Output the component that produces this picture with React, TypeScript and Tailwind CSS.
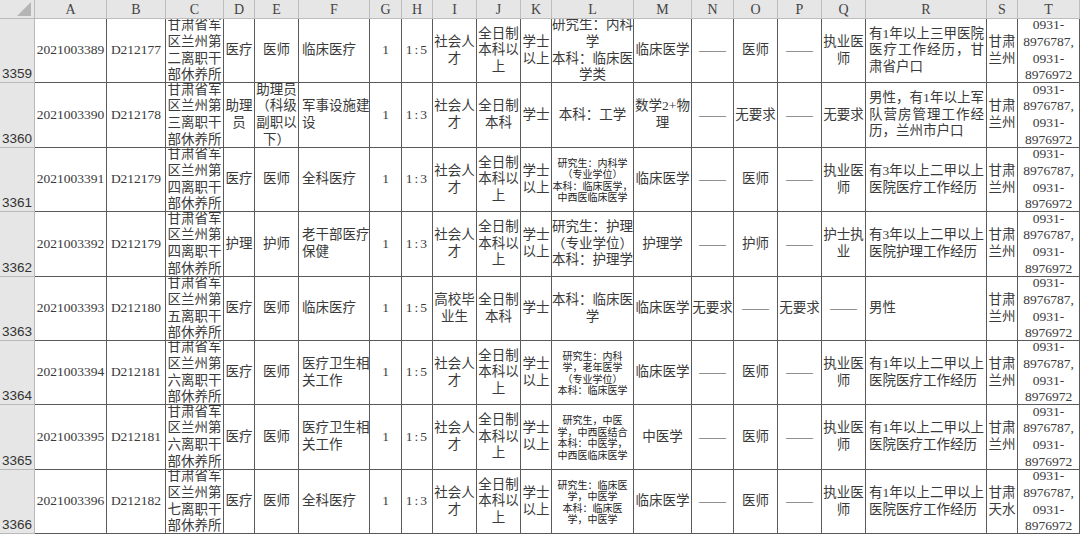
import React from "react";

type Align = "c" | "l" | "j";
type CellDef = { t: string[]; a?: Align; s?: boolean; w?: boolean };

const TEL = ["0931-", "8976787,", "0931-", "8976972"];

const cols = ["A","B","C","D","E","F","G","H","I","J","K","L","M","N","O","P","Q","R","S","T"];

const unit = (n: string) => ["甘肃省军", "区兰州第", n + "离职干", "部休养所"];

const rows: { n: number; cells: CellDef[] }[] = [
  {
    n: 3359,
    cells: [
      { t: ["2021003389"] }, { t: ["D212177"] }, { t: unit("二") }, { t: ["医疗"] }, { t: ["医师"] },
      { t: ["临床医疗"], a: "l" }, { t: ["1"] }, { t: ["1:5"], w: true }, { t: ["社会人", "才"] },
      { t: ["全日制", "本科以", "上"] }, { t: ["学士", "以上"] },
      { t: ["研究生：内科", "学", "本科：临床医", "学类"] }, { t: ["临床医学"] }, { t: ["——"] },
      { t: ["医师"] }, { t: ["——"] }, { t: ["执业医", "师"] },
      { t: ["有1年以上三甲医院", "医疗工作经历，甘", "肃省户口"], a: "j" }, { t: ["甘肃", "兰州"] }, { t: TEL },
    ],
  },
  {
    n: 3360,
    cells: [
      { t: ["2021003390"] }, { t: ["D212178"] }, { t: unit("三") }, { t: ["助理", "员"] },
      { t: ["助理员", "（科级", "副职以", "下）"] }, { t: ["军事设施建", "设"], a: "l" }, { t: ["1"] },
      { t: ["1:3"], w: true }, { t: ["社会人", "才"] }, { t: ["全日制", "本科"] }, { t: ["学士"] },
      { t: ["本科：工学"] }, { t: ["数学2+物", "理"] }, { t: ["——"] }, { t: ["无要求"] }, { t: ["——"] },
      { t: ["无要求"] }, { t: ["男性，有1年以上军", "队营房管理工作经", "历，兰州市户口"], a: "j" },
      { t: ["甘肃", "兰州"] }, { t: TEL },
    ],
  },
  {
    n: 3361,
    cells: [
      { t: ["2021003391"] }, { t: ["D212179"] }, { t: unit("四") }, { t: ["医疗"] }, { t: ["医师"] },
      { t: ["全科医疗"], a: "l" }, { t: ["1"] }, { t: ["1:3"], w: true }, { t: ["社会人", "才"] },
      { t: ["全日制", "本科以", "上"] }, { t: ["学士", "以上"] },
      { t: ["研究生：内科学", "（专业学位）", "本科：临床医学，", "中西医临床医学"], s: true },
      { t: ["临床医学"] }, { t: ["——"] }, { t: ["医师"] }, { t: ["——"] }, { t: ["执业医", "师"] },
      { t: ["有3年以上二甲以上", "医院医疗工作经历"], a: "j" }, { t: ["甘肃", "兰州"] }, { t: TEL },
    ],
  },
  {
    n: 3362,
    cells: [
      { t: ["2021003392"] }, { t: ["D212179"] }, { t: unit("四") }, { t: ["护理"] }, { t: ["护师"] },
      { t: ["老干部医疗", "保健"], a: "l" }, { t: ["1"] }, { t: ["1:3"], w: true }, { t: ["社会人", "才"] },
      { t: ["全日制", "本科以", "上"] }, { t: ["学士", "以上"] },
      { t: ["研究生：护理", "（专业学位）", "本科：护理学"] }, { t: ["护理学"] }, { t: ["——"] },
      { t: ["护师"] }, { t: ["——"] }, { t: ["护士执", "业"] },
      { t: ["有3年以上二甲以上", "医院护理工作经历"], a: "j" }, { t: ["甘肃", "兰州"] }, { t: TEL },
    ],
  },
  {
    n: 3363,
    cells: [
      { t: ["2021003393"] }, { t: ["D212180"] }, { t: unit("五") }, { t: ["医疗"] }, { t: ["医师"] },
      { t: ["临床医疗"], a: "l" }, { t: ["1"] }, { t: ["1:5"], w: true }, { t: ["高校毕", "业生"] },
      { t: ["全日制", "本科"] }, { t: ["学士"] }, { t: ["本科：临床医", "学"] }, { t: ["临床医学"] },
      { t: ["无要求"] }, { t: ["——"] }, { t: ["无要求"] }, { t: ["——"] }, { t: ["男性"], a: "l" },
      { t: ["甘肃", "兰州"] }, { t: TEL },
    ],
  },
  {
    n: 3364,
    cells: [
      { t: ["2021003394"] }, { t: ["D212181"] }, { t: unit("六") }, { t: ["医疗"] }, { t: ["医师"] },
      { t: ["医疗卫生相", "关工作"], a: "l" }, { t: ["1"] }, { t: ["1:5"], w: true }, { t: ["社会人", "才"] },
      { t: ["全日制", "本科以", "上"] }, { t: ["学士", "以上"] },
      { t: ["研究生：内科", "学，老年医学", "（专业学位）", "本科：临床医学"], s: true },
      { t: ["临床医学"] }, { t: ["——"] }, { t: ["医师"] }, { t: ["——"] }, { t: ["执业医", "师"] },
      { t: ["有1年以上二甲以上", "医院医疗工作经历"], a: "j" }, { t: ["甘肃", "兰州"] }, { t: TEL },
    ],
  },
  {
    n: 3365,
    cells: [
      { t: ["2021003395"] }, { t: ["D212181"] }, { t: unit("六") }, { t: ["医疗"] }, { t: ["医师"] },
      { t: ["医疗卫生相", "关工作"], a: "l" }, { t: ["1"] }, { t: ["1:5"], w: true }, { t: ["社会人", "才"] },
      { t: ["全日制", "本科以", "上"] }, { t: ["学士", "以上"] },
      { t: ["研究生，中医", "学，中西医结合", "本科：中医学，", "中西医临床医学"], s: true },
      { t: ["中医学"] }, { t: ["——"] }, { t: ["医师"] }, { t: ["——"] }, { t: ["执业医", "师"] },
      { t: ["有1年以上二甲以上", "医院医疗工作经历"], a: "j" }, { t: ["甘肃", "兰州"] }, { t: TEL },
    ],
  },
  {
    n: 3366,
    cells: [
      { t: ["2021003396"] }, { t: ["D212182"] }, { t: unit("七") }, { t: ["医疗"] }, { t: ["医师"] },
      { t: ["全科医疗"], a: "l" }, { t: ["1"] }, { t: ["1:3"], w: true }, { t: ["社会人", "才"] },
      { t: ["全日制", "本科以", "上"] }, { t: ["学士", "以上"] },
      { t: ["研究生：临床医", "学，中医学", "本科：临床医", "学，中医学"], s: true },
      { t: ["临床医学"] }, { t: ["——"] }, { t: ["医师"] }, { t: ["——"] }, { t: ["执业医", "师"] },
      { t: ["有1年以上二甲以上", "医院医疗工作经历"], a: "j" }, { t: ["甘肃", "天水"] }, { t: TEL },
    ],
  },
];

function Cell({ c }: { c: CellDef }) {
  const align = c.a ?? "c";
  const box =
    align === "c"
      ? "items-center text-center px-px"
      : "items-start text-left pl-[3px] pr-[2px]";
  const font = c.s
    ? "font-['Noto_Sans_CJK_SC',sans-serif] text-[10px] leading-[11.5px] text-[#222]"
    : "font-['Liberation_Serif','Noto_Sans_CJK_SC',serif] text-[13.5px] leading-[16.6px] text-[#3a3a3a]";
  const track = c.w ? "tracking-[2px] pl-[2px]" : "";
  return (
    <div className="flex flex-col justify-center overflow-hidden border-r border-b border-[#5a5a5a] bg-white">
      <div className={`flex flex-col ${box} ${font} ${track}`}>
        {c.t.map((line, i) => (
          <div
            key={i}
            className={
              align === "j" && i < c.t.length - 1
                ? "w-full whitespace-nowrap text-justify [text-align-last:justify]"
                : "whitespace-nowrap"
            }
          >
            {line}
          </div>
        ))}
      </div>
    </div>
  );
}

export default function App() {
  return (
    <div className="w-[1080px] h-[534px] overflow-hidden bg-white">
      <div className="grid grid-cols-[35px_72px_59px_58px_31px_44px_71px_32px_31px_44px_44px_31px_82px_58px_42px_44px_44px_44px_121px_31px_62px] grid-rows-[19px_64px_65px_64px_65px_64px_64px_65px_64px]">
        <div className="relative border-r border-b border-[#b9b9b9] bg-[#e6e6e6]">
          <svg className="absolute right-[3px] bottom-[2px]" width="14" height="14" viewBox="0 0 14 14">
            <polygon points="14,0 14,14 0,14" fill="#b5b5b5" />
          </svg>
        </div>
        {cols.map((l) => (
          <div
            key={l}
            className="flex items-center justify-center border-r border-b border-[#bdbdbd] bg-[#e6e6e6] font-['Liberation_Serif',serif] text-[14px] text-[#444]"
          >
            {l}
          </div>
        ))}
        {rows.map((r) => (
          <React.Fragment key={r.n}>
            <div className="flex items-end border-r border-b border-[#b9b9b9] bg-[#e6e6e6] pl-[2px] pb-0 font-['Liberation_Sans',sans-serif] text-[13.5px] leading-[16px] text-[#333]">
              {r.n}
            </div>
            {r.cells.map((c, i) => (
              <Cell key={i} c={c} />
            ))}
          </React.Fragment>
        ))}
      </div>
    </div>
  );
}
